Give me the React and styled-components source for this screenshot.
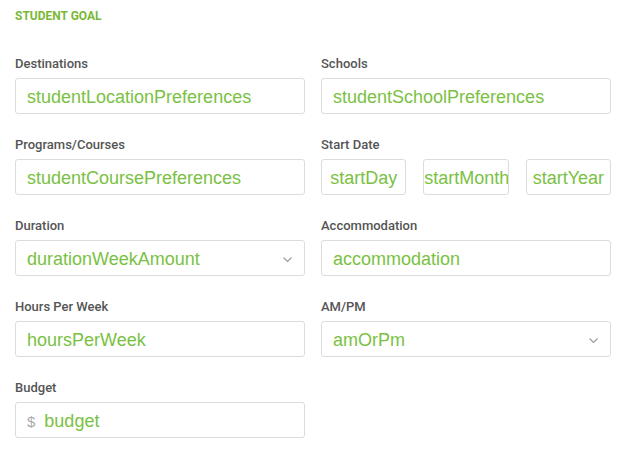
import React from 'react';
import styled, { createGlobalStyle } from 'styled-components';

const GlobalStyle = createGlobalStyle`
  body {
    margin: 0;
    background: #fff;
    font-family: Roboto, "Liberation Sans", sans-serif;
  }
`;

const Page = styled.div`
  padding: 9px 10px 0 15px;
`;

const SectionTitle = styled.h2`
  margin: 0 0 33px;
  font-size: 12px;
  line-height: 14px;
  font-weight: 700;
  color: #7ab836;
`;

const Grid = styled.div`
  display: grid;
  grid-template-columns: 290px 290px;
  column-gap: 16px;
  row-gap: 23px;
`;

const Field = styled.div`
  display: flex;
  flex-direction: column;
`;

const Label = styled.label`
  font-size: 13px;
  line-height: 16px;
  font-weight: 500;
  color: #555;
  margin-bottom: 6px;
`;

const Box = styled.div`
  box-sizing: border-box;
  height: 36px;
  border: 1px solid #dcdcdc;
  border-radius: 3px;
  background: #fff;
  display: flex;
  align-items: center;
  padding: 2px 12px 0 11px;
  gap: 9px;
`;

const Value = styled.span`
  flex: 1;
  font-family: "Liberation Sans", Arial, sans-serif;
  font-size: 18px;
  color: #7ac143;
  white-space: nowrap;
`;

const Prefix = styled.span`
  font-family: "Liberation Sans", Arial, sans-serif;
  font-size: 15px;
  color: #aaa;
`;

const DateRow = styled.div`
  display: flex;
  gap: 17px;
`;

const DateInput = styled.input`
  box-sizing: border-box;
  flex: 1;
  min-width: 0;
  height: 36px;
  border: 1px solid #dcdcdc;
  border-radius: 3px;
  padding: 2px 0 0;
  text-align: center;
  font-family: "Liberation Sans", Arial, sans-serif;
  font-size: 18px;
  color: #7ac143;
  outline: none;
`;

const Chevron = () => (
  <svg width="9" height="5" viewBox="0 0 9 5" fill="none">
    <path d="M0.5 0.5l4 4 4-4" stroke="#999" strokeWidth="1.1" />
  </svg>
);

const TextField = ({ label, value, prefix, select }) => (
  <Field>
    <Label>{label}</Label>
    <Box>
      {prefix && <Prefix>{prefix}</Prefix>}
      <Value>{value}</Value>
      {select && <Chevron />}
    </Box>
  </Field>
);

export default function App() {
  return (
    <Page>
      <GlobalStyle />
      <SectionTitle>STUDENT GOAL</SectionTitle>
      <Grid>
        <TextField label="Destinations" value="studentLocationPreferences" />
        <TextField label="Schools" value="studentSchoolPreferences" />
        <TextField label="Programs/Courses" value="studentCoursePreferences" />
        <Field>
          <Label>Start Date</Label>
          <DateRow>
            <DateInput readOnly value="startDay" />
            <DateInput readOnly value="startMonth" />
            <DateInput readOnly value="startYear" />
          </DateRow>
        </Field>
        <TextField label="Duration" value="durationWeekAmount" select />
        <TextField label="Accommodation" value="accommodation" />
        <TextField label="Hours Per Week" value="hoursPerWeek" />
        <TextField label="AM/PM" value="amOrPm" select />
        <TextField label="Budget" value="budget" prefix="$" />
      </Grid>
    </Page>
  );
}
